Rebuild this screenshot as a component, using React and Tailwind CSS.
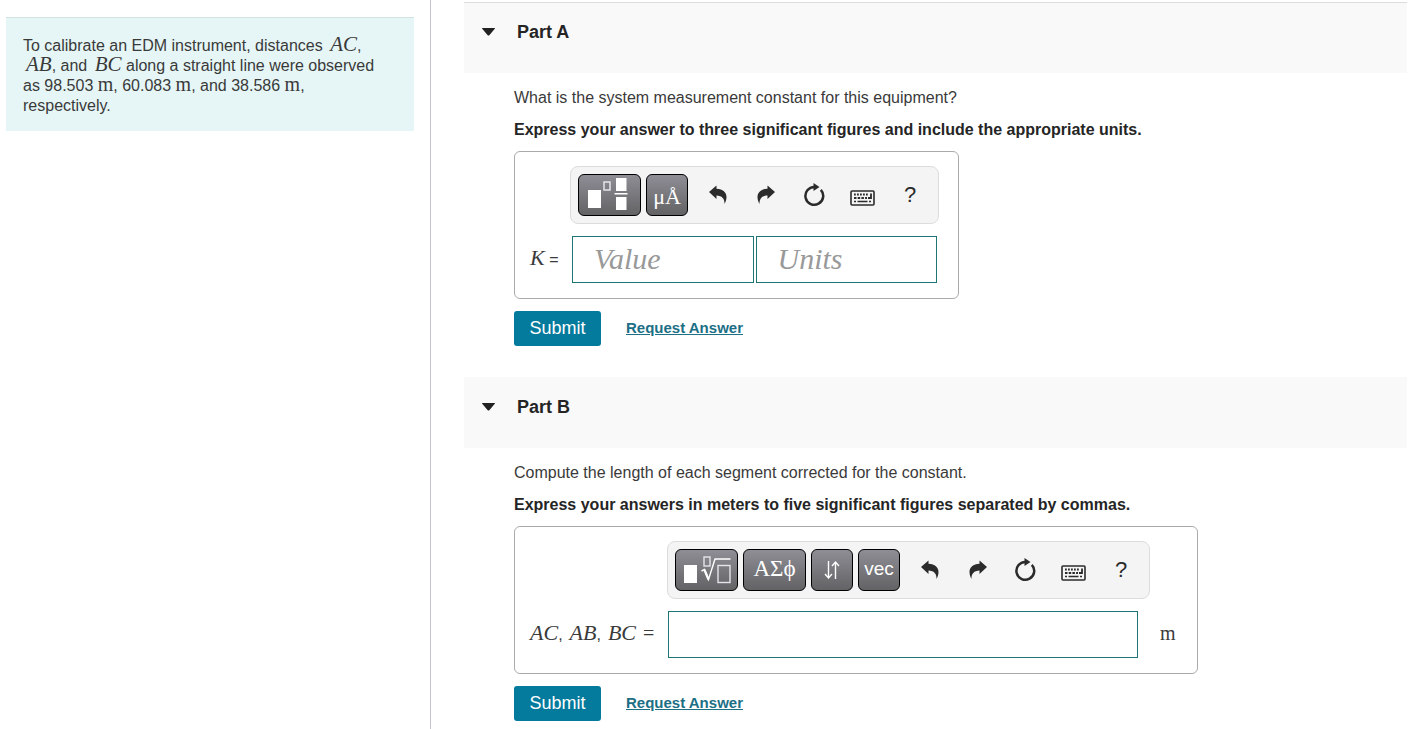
import { useState } from "react";

// Italic variable name inside a sentence, e.g. AC
function Var({ children }) {
  return <i className="ml-[3px] font-['Liberation_Serif',serif] text-[21px] leading-[0]">{children}</i>;
}

// Bigger variable name, used in front of an answer box
function BigVar({ children }) {
  return <i className="font-['Liberation_Serif',serif] text-[22px] leading-[0]">{children}</i>;
}

// Upright unit symbol
function Unit({ children }) {
  return <span className="font-['Liberation_Serif',serif] text-[20px] leading-[0]">{children}</span>;
}

function UndoIcon({ flip }) {
  return (
    <svg width="18" height="20" viewBox="0 0 18 20" className={flip ? "-scale-x-100" : ""} aria-hidden="true">
      <path d="M0 7 7.500.5v3.300C14 4 17.500 7.500 17.500 12c0 2.500-.7 4.800-2 7C15.800 14 13 10.500 7.500 10.500v3.500Z" fill="#2b2b2b" />
    </svg>
  );
}

function ResetIcon() {
  return (
    <svg width="22" height="24" viewBox="0 0 22 24" aria-hidden="true">
      <path d="M11.500 4A8.900 8.900 0 1 0 17.800 6.800" fill="none" stroke="#2b2b2b" strokeWidth="2.500" />
      <path d="M10.500 0 16.500 4 10.500 8Z" fill="#2b2b2b" />
    </svg>
  );
}

function KeyboardIcon() {
  return (
    <svg width="25" height="16" viewBox="0 0 25 16" fill="none" stroke="#2b2b2b" aria-hidden="true">
      <rect x="1" y="1" width="23" height="14" rx="1" strokeWidth="1.600" />
      <path d="M4 4.500h15" strokeWidth="1.800" strokeDasharray="1.800 1.200" />
      <path d="M4 8h13" strokeWidth="1.800" strokeDasharray="2.500 1.200" />
      <path d="M21 3.500V8h-3" strokeWidth="1.800" />
      <path d="M4 11.500h2M7.500 11.500h10M19 11.500h2" strokeWidth="1.600" />
    </svg>
  );
}

// Square, exponent and fraction
function TemplatesIcon() {
  return (
    <svg width="44" height="34" viewBox="0 0 44 34" aria-hidden="true">
      <rect x="0" y="12" width="13" height="18" fill="#fff" />
      <rect x="16" y="4" width="6" height="8" fill="none" stroke="#e5e5e8" strokeWidth="1.500" />
      <path d="M28 0h10.500v13H28zM28 19h10.500v13H28zM26.500 15h13v1.600h-13z" fill="#fff" />
    </svg>
  );
}

// Square and nth root
function RootIcon() {
  return (
    <svg width="48" height="32" viewBox="0 0 48 32" className="shrink-0" aria-hidden="true">
      <rect x="1" y="11" width="13" height="18" fill="#fff" />
      <rect x="21" y="3" width="6" height="9" fill="none" stroke="#e5e5e8" strokeWidth="1.400" />
      <rect x="35" y="11.500" width="12" height="17" fill="none" stroke="#e5e5e8" strokeWidth="1.400" />
      <path d="M18.500 17l3-1.500 4 10L32 5H47.500" fill="none" stroke="#fff" strokeWidth="1.400" />
      <path d="M21.500 16l4 9.500" stroke="#fff" strokeWidth="2.200" />
    </svg>
  );
}

function ArrowsIcon() {
  return (
    <svg width="16" height="20" viewBox="0 0 16 20" fill="none" stroke="#fff" strokeWidth="1.400" aria-hidden="true">
      <path d="M4.500 1v17M1 14l3.500 4L8 14M11.500 19V2M8 6l3.500-4L15 6" />
    </svg>
  );
}

function DarkButton({ label, wide, children }) {
  return (
    <button
      type="button"
      aria-label={label}
      className={`flex h-[42px] items-center justify-center rounded-md border border-black bg-gradient-to-b from-[#8f8e96] to-[#636365] text-white ${wide ? "w-[63px]" : "w-[42px]"}`}
    >
      {children}
    </button>
  );
}

function ToolButton({ label, children }) {
  return (
    <button type="button" aria-label={label} className="flex h-[42px] w-12 items-center justify-center text-[#2b2b2b]">
      {children}
    </button>
  );
}

function Toolbar({ children }) {
  return (
    <div className="flex h-[58px] items-center rounded-lg border border-[#dcdcdc] bg-[#f4f4f4] pr-1 pl-[7px]">
      <div className="mr-1.5 flex gap-[5px]">{children}</div>
      <ToolButton label="Undo"><UndoIcon /></ToolButton>
      <ToolButton label="Redo"><UndoIcon flip /></ToolButton>
      <ToolButton label="Reset"><ResetIcon /></ToolButton>
      <ToolButton label="Keyboard shortcuts"><span className="pt-1.5"><KeyboardIcon /></span></ToolButton>
      <ToolButton label="Help"><span className="text-[22px]">?</span></ToolButton>
    </div>
  );
}

function Part({ title, question, instruction, topBorder, children }) {
  const [open, setOpen] = useState(true);

  return (
    <section className="pb-[31px]">
      <h2 className={`h-[71px] border-t bg-[#f9f9f9] ${topBorder ? "border-[#dcdcdc]" : "border-transparent"}`}>
        <button
          type="button"
          aria-expanded={open}
          onClick={() => setOpen(!open)}
          className="flex h-[58px] w-full items-center gap-[21px] pl-[17px] text-[18px] font-bold text-[#252525]"
        >
          <svg width="15" height="8" viewBox="0 0 15 8" aria-hidden="true">
            <path d="M1.500 0h12q1 0 .3.800L8.500 7q-1 1-2 0L1.200.800Q.500 0 1.500 0Z" fill="#222" />
          </svg>
          {title}
        </button>
      </h2>
      {open && (
        <div className="pt-[15px] pl-[50px]">
          <p>{question}</p>
          <p className="mt-3 font-bold text-[#252525]">{instruction}</p>
          {children}
          <div className="mt-3 flex items-center gap-[25px]">
            <button type="submit" className="h-[35px] w-[87px] rounded-[3px] bg-[#047a9c] pb-0.5 text-[18px] text-white">
              Submit
            </button>
            <a href="#request" className="pb-0.5 text-[15px] font-bold text-[#1c6f85] underline">
              Request Answer
            </a>
          </div>
        </div>
      )}
    </section>
  );
}

const fieldClass =
  "h-[47px] border border-[#1f7474] bg-white px-[21px] pb-0.5 font-['Liberation_Serif',serif] text-[30px] italic placeholder:text-[#999] outline-none";

export default function App() {
  return (
    <div className="flex min-h-screen bg-white font-['Liberation_Sans',Arial,sans-serif] text-[16px] leading-5 text-[#3a3a3a]">
      {/* Problem statement */}
      <aside className="w-[431px] shrink-0 border-r border-[#c4c4d4] pt-[17px] pr-4 pl-1.5">
        <div className="border-t border-[#d3e3e4] bg-[#e6f6f6] pt-[18px] pr-7 pb-[15px] pl-[17px]">
          To calibrate an EDM instrument, distances <Var>AC</Var>, <Var>AB</Var>, and <Var>BC</Var> along a
          straight line were observed as 98.503 <Unit>m</Unit>, 60.083 <Unit>m</Unit>, and 38.586{" "}
          <Unit>m</Unit>, respectively.
        </div>
      </aside>

      <main className="min-w-0 flex-1 pt-0.5 pr-[18px] pl-[33px]">
        <Part
          title="Part A"
          question="What is the system measurement constant for this equipment?"
          instruction="Express your answer to three significant figures and include the appropriate units."
          topBorder
        >
          <div className="mt-[11px] grid w-fit grid-cols-[40px_auto] gap-y-3 rounded-md border border-[#aaa] pt-3.5 pr-[19px] pb-[15px] pl-[15px]">
            <div className="col-start-2">
              <Toolbar>
                <DarkButton label="Templates" wide><TemplatesIcon /></DarkButton>
                <DarkButton label="Unit symbols">
                  <span className="pt-1 font-['Liberation_Serif',serif] text-[22px]">μÅ</span>
                </DarkButton>
              </Toolbar>
            </div>
            <label htmlFor="k-value" className="self-center">
              <BigVar>K</BigVar> =
            </label>
            <div className="flex gap-0.5 px-0.5">
              <input id="k-value" placeholder="Value" className={`${fieldClass} w-0 flex-1`} />
              <input aria-label="Units" placeholder="Units" className={`${fieldClass} w-0 flex-1`} />
            </div>
          </div>
        </Part>

        <Part
          title="Part B"
          question="Compute the length of each segment corrected for the constant."
          instruction="Express your answers in meters to five significant figures separated by commas."
        >
          <div className="mt-[11px] grid w-fit grid-cols-[137px_471px_59px] gap-y-3 rounded-md border border-[#aaa] pt-3.5 pb-[15px] pl-[15px]">
            <div className="col-start-2 -mr-3">
              <Toolbar>
                <DarkButton label="Templates" wide><RootIcon /></DarkButton>
                <DarkButton label="Greek letters" wide>
                  <span className="pb-0.5 font-['Liberation_Serif',serif] text-[23px]">ΑΣϕ</span>
                </DarkButton>
                <DarkButton label="Arrows"><ArrowsIcon /></DarkButton>
                <DarkButton label="Vectors"><span className="pb-0.5 text-[19px]">vec</span></DarkButton>
              </Toolbar>
            </div>
            <label htmlFor="lengths" className="col-start-1 flex items-baseline gap-[7px] self-center">
              <span><BigVar>AC</BigVar>,</span>
              <span><BigVar>AB</BigVar>,</span>
              <span><BigVar>BC</BigVar></span>
              <span><Unit>=</Unit></span>
            </label>
            <input id="lengths" className={`${fieldClass} ml-px min-w-0`} />
            <span className="self-center pl-[22px]"><Unit>m</Unit></span>
          </div>
        </Part>
      </main>
    </div>
  );
}
